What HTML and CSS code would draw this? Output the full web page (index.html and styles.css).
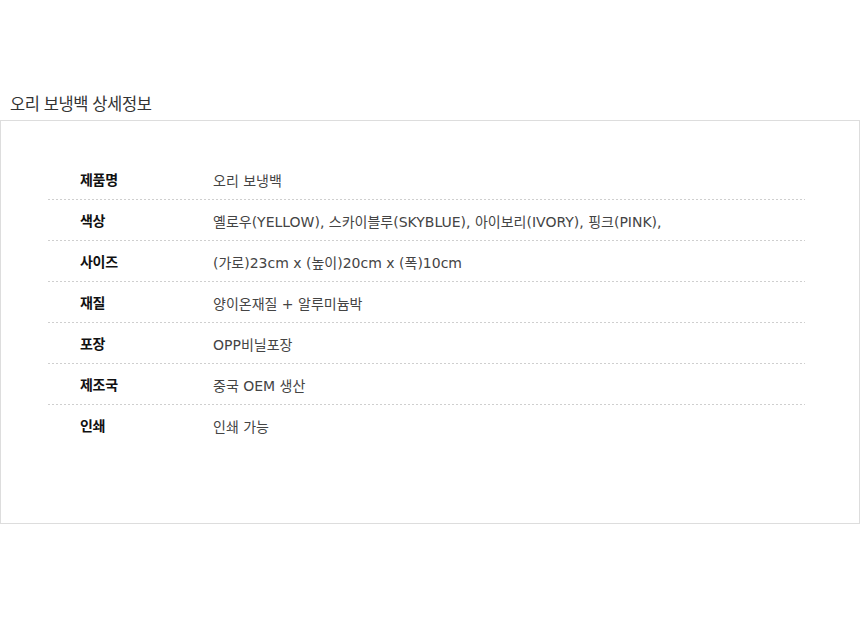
FILE: index.html
```html
<!DOCTYPE html>
<html lang="ko">
<head>
<meta charset="utf-8">
<link rel="stylesheet" href="styles.css">
</head>
<body>
<div class="page">
  <h2 class="title">오리 보냉백 상세정보</h2>
  <div class="box">
    <div class="table">
      <div class="row"><div class="label">제품명</div><div class="value">오리 보냉백</div></div>
      <div class="row"><div class="label">색상</div><div class="value">옐로우(YELLOW), 스카이블루(SKYBLUE), 아이보리(IVORY), 핑크(PINK),</div></div>
      <div class="row"><div class="label">사이즈</div><div class="value">(가로)23cm x (높이)20cm x (폭)10cm</div></div>
      <div class="row"><div class="label">재질</div><div class="value">양이온재질 + 알루미늄박</div></div>
      <div class="row"><div class="label">포장</div><div class="value">OPP비닐포장</div></div>
      <div class="row"><div class="label">제조국</div><div class="value">중국 OEM 생산</div></div>
      <div class="row"><div class="label">인쇄</div><div class="value">인쇄 가능</div></div>
    </div>
  </div>
</div>
</body>
</html>
```

FILE: styles.css
```css
html, body {
  margin: 0;
  padding: 0;
  background: #fff;
}
body {
  font-family: "Noto Sans CJK KR", "Noto Sans", sans-serif;
  color: #333;
}
.page {
  padding-top: 92px;
}
.title {
  margin: 0 0 6px 10px;
  font-size: 16.5px;
  font-weight: 400;
  line-height: 22px;
  color: #333;
  letter-spacing: -0.4px;
}
.box {
  border: 1px solid #ddd;
  width: 858px;
  height: 402px;
  box-sizing: content-box;
  padding: 0;
}
.table {
  margin: 38px 54px 0 47px;
}
.row {
  display: flex;
  align-items: center;
  height: 41px;
  background-image: linear-gradient(to right, #cfcfcf 50%, transparent 50%);
  background-size: 4px 1px;
  background-repeat: repeat-x;
  background-position: left bottom;
}
.row:last-child {
  background: none;
}
.label {
  width: 165px;
  padding-left: 32px;
  box-sizing: border-box;
  font-size: 14px;
  font-weight: 700;
  color: #111;
  letter-spacing: -0.3px;
  margin-top: -2px;
}
.value {
  font-family: "DejaVu Sans", "Noto Sans CJK KR", sans-serif;
  font-size: 14px;
  color: #444;
  letter-spacing: 0;
}
```
